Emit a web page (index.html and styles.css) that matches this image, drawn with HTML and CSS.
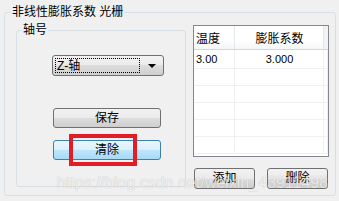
FILE: index.html
```
<!DOCTYPE html>
<html>
<head>
	<meta charset="utf-8">
	<title>非线性膨胀系数 光栅</title>
	<link rel="stylesheet" href="styles.css">
</head>
<body>
	<!-- 外层分组 -->
	<fieldset class="group">
		<legend>非线性膨胀系数 光栅</legend>

		<!-- 轴号 -->
		<fieldset class="axis">
			<legend>轴号</legend>
			<div class="axisBody">
				<div class="combo">
					<span class="comboText">Z-轴</span>
					<span class="arrow"></span>
				</div>
				<div class="btn save">保存</div>
				<div class="btn clear">清除<span class="mark"></span></div>
			</div>
		</fieldset>

		<!-- 表格区 -->
		<div class="side">
			<div class="grid">
				<table>
					<tr>
						<th class="c1">温度</th>
						<th class="c2">膨胀系数</th>
						<th class="c3"></th>
					</tr>
					<tr class="first">
						<td class="num">3.00</td>
						<td class="num center">3.000</td>
						<td></td>
					</tr>
					<tr><td></td><td></td><td></td></tr>
					<tr><td></td><td></td><td></td></tr>
					<tr><td></td><td></td><td></td></tr>
					<tr><td></td><td></td><td></td></tr>
					<tr><td></td><td></td><td></td></tr>
				</table>
			</div>
			<div class="actions">
				<div class="btn small add">添加</div>
				<div class="btn small del">删除</div>
			</div>
		</div>
	</fieldset>

	<div class="watermark">https://blog.csdn.net/weixin_43911498</div>
</body>
</html>
```

FILE: styles.css
```
* {
	margin: 0;
	padding: 0;
	box-sizing: border-box;
}

body {
	width: 339px;
	height: 201px;
	overflow: hidden;
	background-color: #f0f0f0;
	font-family: "Liberation Sans", "Noto Sans CJK SC", sans-serif;
	font-size: 12px;
	color: #000;
	position: relative;
}

fieldset {
	border: 1px solid #d5dfe5;
	border-radius: 3px;
}

legend {
	padding: 0 1px;
	line-height: 16px;
	height: 16px;
}

/* 外层分组 */
.group {
	margin: 4px 3px 0 4px;
	padding: 2px 6px 6px 11px;
	display: flex;
	align-items: flex-start;
}

.group > legend {
	margin-left: -5px;
}

/* 轴号分组 */
.axis {
	width: 170px;
	padding: 0 0 26px 5px;
}

.axisBody {
	padding-left: 30px;
}

.combo {
	width: 112px;
	height: 21px;
	margin-top: 17px;
	border: 1px solid #707070;
	border-radius: 3px;
	background: linear-gradient(#f2f2f2 0%, #ebebeb 50%, #dddddd 50%, #cfcfcf 100%);
	display: flex;
	align-items: center;
	padding: 2px;
}

.comboText {
	flex: 1;
	height: 15px;
	line-height: 14px;
	border: 1px dotted #000;
	padding-left: 1px;
}

.arrow {
	width: 0;
	height: 0;
	margin: 0 5px 0 8px;
	border-left: 4px solid transparent;
	border-right: 4px solid transparent;
	border-top: 4px solid #000;
}

/* 按钮 */
.btn {
	height: 20px;
	line-height: 18px;
	text-align: center;
	border: 1px solid #707070;
	border-radius: 3px;
	background: linear-gradient(#f2f2f2 0%, #ebebeb 50%, #dddddd 50%, #cfcfcf 100%);
}

.save,
.clear {
	width: 108px;
	margin-left: 1px;
}

.save {
	margin-top: 32px;
}

.clear {
	margin-top: 12px;
	position: relative;
	border-color: #3c7fb1;
	background: linear-gradient(#eaf6fd 0%, #d9f0fc 50%, #bee6fd 50%, #a7d9f5 100%);
}

/* 红色标记框 */
.mark {
	position: absolute;
	left: 15px;
	top: -7px;
	width: 68px;
	height: 32px;
	border: 4px solid #e31d25;
}

/* 右侧 */
.side {
	margin: 3px 0 0 7px;
	width: 136px;
}

.grid {
	height: 132px;
	border: 1px solid #828790;
	background-color: #fff;
	overflow: hidden;
}

table {
	width: 100%;
	border-collapse: collapse;
	table-layout: fixed;
}

th {
	height: 23px;
	font-weight: normal;
	text-align: left;
	padding-left: 2px;
	background: linear-gradient(#ffffff 0%, #ffffff 60%, #f5f6f7 100%);
	border-right: 1px solid #e3e8ee;
	border-bottom: 1px solid #d5d5d5;
}

th.c1 {
	width: 40px;
}

th.c2 {
	width: 89px;
	text-align: center;
}

th.c3 {
	background: #f3f3f3;
	border-right: none;
}

td {
	height: 17px;
	border-right: 1px solid #f0f0f0;
	border-bottom: 1px solid #f0f0f0;
	padding-left: 2px;
}

tr.first td {
	height: 19px;
}

td.num {
	font-size: 11px;
}

td.center {
	text-align: center;
}

.actions {
	display: flex;
	margin-top: 11px;
	gap: 12px;
}

.small {
	width: 61px;
	height: 21px;
	line-height: 19px;
}

.add {
	margin-left: 1px;
}

/* 水印 */
.watermark {
	position: absolute;
	left: 57px;
	top: 175px;
	font-family: "Liberation Sans", sans-serif;
	font-size: 16px;
	line-height: 16px;
	color: rgba(255, 255, 255, 0.75);
	text-shadow: 0 0 1px rgba(0, 0, 0, 0.25);
	white-space: nowrap;
}
```
